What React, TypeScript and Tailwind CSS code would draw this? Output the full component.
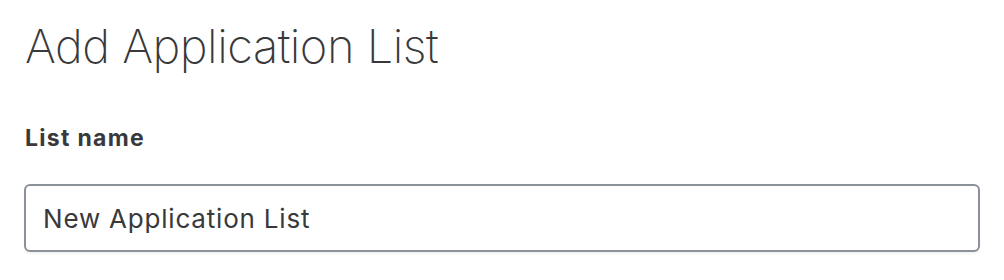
import React from 'react';

const App: React.FC = () => {
  return (
    <div className="w-[1004px] h-[280px] bg-white px-[24px] pt-[18px] font-['Inter',sans-serif] text-[#39393b]">
      <h1 className="pl-px text-[47px] font-extralight leading-[56px] tracking-[-0.5px]">Add Application List</h1>
      <div className="mt-[50px] pl-px">
        <label className="block text-[23px] font-bold leading-[28px] tracking-[1.3px] text-[#39393b]">List name</label>
      </div>
      <input
        type="text"
        defaultValue="New Application List"
        className="mt-[32px] block w-[956px] h-[68px] rounded-[6px] border-2 border-[#8b9199] bg-white px-[17px] text-[26px] tracking-[0.8px] text-[#39393b] shadow-[0_2px_2px_rgba(0,0,0,0.05)] outline-none"
      />
    </div>
  );
};

export default App;
